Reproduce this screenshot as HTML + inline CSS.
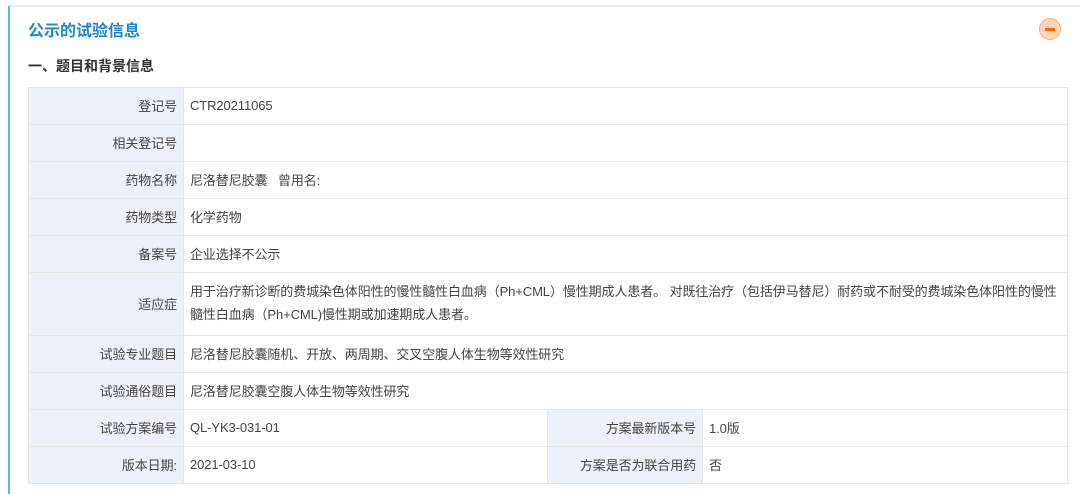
<!DOCTYPE html><html><head><meta charset="utf-8"><style>
body{margin:0;width:1080px;height:494px;background:#fff;font-family:"Liberation Sans","Noto Sans CJK SC",sans-serif;overflow:hidden;position:relative}
.top{position:absolute;left:8px;top:5px;width:1072px;height:2px;background:#ececec}
.lb{position:absolute;left:8px;top:6px;width:2px;height:488px;background:#5bb8e6}
.t{position:absolute;left:28px;top:17px;font-size:16px;font-weight:bold;color:#1a86d8}
.h{position:absolute;left:28px;top:56px;font-size:14px;font-weight:bold;color:#333}
.ic{position:absolute;left:1039px;top:18px;width:22px;height:22px;border-radius:50%;background:#ffd5b8;border:1px solid #ffb07a;box-sizing:border-box}
.ic:after{content:"";position:absolute;left:5px;top:9px;width:10px;height:3px;background:#ff6a00}
table{position:absolute;left:28px;top:87px;width:1040px;border-collapse:collapse;font-size:13px;color:#444;letter-spacing:-0.1px}
td{border:1px solid #e6e6e6;padding:0 6px 2px;height:34px}
td.l{background:#edf1f9;text-align:right;width:142px}
td.tall{height:60px;line-height:23px}
</style></head><body>
<div class="top"></div><div class="lb"></div>
<div class="t">公示的试验信息</div>
<div class="h">一、题目和背景信息</div>
<div class="ic"></div>
<table>
<tr><td class="l">登记号</td><td colspan="3">CTR20211065</td></tr>
<tr><td class="l">相关登记号</td><td colspan="3"></td></tr>
<tr><td class="l">药物名称</td><td colspan="3">尼洛替尼胶囊&nbsp;&nbsp;&nbsp;曾用名:</td></tr>
<tr><td class="l">药物类型</td><td colspan="3">化学药物</td></tr>
<tr><td class="l">备案号</td><td colspan="3">企业选择不公示</td></tr>
<tr><td class="l">适应症</td><td colspan="3" class="tall">用于治疗新诊断的费城染色体阳性的慢性髓性白血病（Ph+CML）慢性期成人患者。 对既往治疗（包括伊马替尼）耐药或不耐受的费城染色体阳性的慢性<br>髓性白血病（Ph+CML)慢性期或加速期成人患者。</td></tr>
<tr><td class="l">试验专业题目</td><td colspan="3">尼洛替尼胶囊随机、开放、两周期、交叉空腹人体生物等效性研究</td></tr>
<tr><td class="l">试验通俗题目</td><td colspan="3">尼洛替尼胶囊空腹人体生物等效性研究</td></tr>
<tr><td class="l">试验方案编号</td><td style="width:351px">QL-YK3-031-01</td><td class="l">方案最新版本号</td><td>1.0版</td></tr>
<tr><td class="l">版本日期:</td><td>2021-03-10</td><td class="l">方案是否为联合用药</td><td>否</td></tr>
</table>
</body></html>
